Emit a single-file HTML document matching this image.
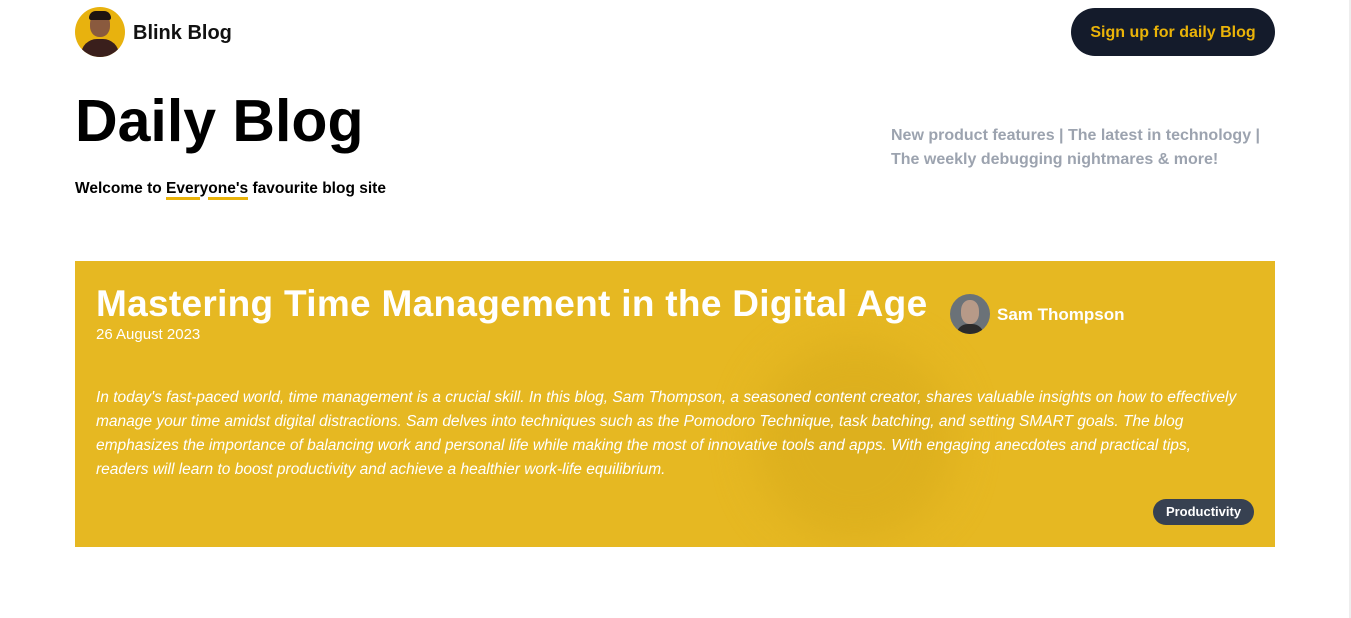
<!DOCTYPE html>
<html><head><style>
body{margin:0;width:1351px;height:618px;background:#fff;font-family:"Liberation Sans",sans-serif;position:relative;overflow:hidden}
.a{position:absolute}
.u{border-bottom:3px solid #eab308}
</style></head><body>
<div class="a" style="left:75px;top:7px;width:50px;height:50px;border-radius:50%;background:#e8b20e;overflow:hidden">
<div class="a" style="left:15px;top:6px;width:20px;height:24px;border-radius:45%;background:#8a5a3e"></div>
<div class="a" style="left:14px;top:4px;width:22px;height:9px;border-radius:10px 10px 3px 3px;background:#1d1410"></div>
<div class="a" style="left:6px;top:32px;width:38px;height:24px;border-radius:16px 16px 0 0;background:#3a1f1c"></div>
</div>
<div class="a" style="left:133px;top:22px;font-size:20px;font-weight:bold;color:#111">Blink Blog</div>
<div class="a" style="left:1071px;top:8px;width:204px;height:48px;border-radius:24px;background:#141b2b;color:#eab308;font-weight:bold;font-size:16px;line-height:50px;text-align:center">Sign up for daily Blog</div>
<div class="a" style="left:75px;top:87px;font-size:59px;font-weight:bold;color:#000">Daily Blog</div>
<div class="a" style="left:75px;top:180px;font-size:15.5px;font-weight:bold;color:#000;white-space:nowrap">Welcome to <span class="u">Ever</span>y<span class="u">one's</span> favourite blog site</div>
<div class="a" style="left:891px;top:124px;font-size:16px;font-weight:bold;color:#9ca3af;line-height:24px;width:390px">New product features | The latest in technology |<br>The weekly debugging nightmares &amp; more!</div>
<div class="a" style="left:75px;top:261px;width:1200px;height:286px;background:#e6b822;overflow:hidden">
<div class="a" style="left:680px;top:80px;width:200px;height:200px;border-radius:50%;background:#ddb01e;filter:blur(20px)"></div>
<div class="a" style="left:21px;top:22px;font-size:37px;font-weight:bold;color:#fff;letter-spacing:0.3px;white-space:nowrap">Mastering Time Management in the Digital Age</div>
<div class="a" style="left:875px;top:33px;width:40px;height:40px;border-radius:50%;background:#6b7278;overflow:hidden"><div class="a" style="left:11px;top:6px;width:18px;height:24px;border-radius:45%;background:#b79a88"></div><div class="a" style="left:6px;top:30px;width:28px;height:14px;border-radius:12px 12px 0 0;background:#2b2b2b"></div></div>
<div class="a" style="left:922px;top:44px;font-size:17px;font-weight:bold;color:#fff">Sam Thompson</div>
<div class="a" style="left:21px;top:65px;font-size:15px;color:#fff">26 August 2023</div>
<div class="a" style="left:21px;top:125px;width:1170px;font-size:15.5px;font-style:italic;color:#fff;line-height:24px;white-space:nowrap">In today's fast-paced world, time management is a crucial skill. In this blog, Sam Thompson, a seasoned content creator, shares valuable insights on how to effectively<br>manage your time amidst digital distractions. Sam delves into techniques such as the Pomodoro Technique, task batching, and setting SMART goals. The blog<br>emphasizes the importance of balancing work and personal life while making the most of innovative tools and apps. With engaging anecdotes and practical tips,<br>readers will learn to boost productivity and achieve a healthier work-life equilibrium.</div>
<div class="a" style="left:1078px;top:238px;width:101px;height:26px;border-radius:13px;background:#374151;color:#fff;font-size:13px;font-weight:bold;line-height:26px;text-align:center">Productivity</div>
</div>
<div class="a" style="left:1349px;top:0;width:2px;height:618px;background:#eee"></div>
</body></html>
